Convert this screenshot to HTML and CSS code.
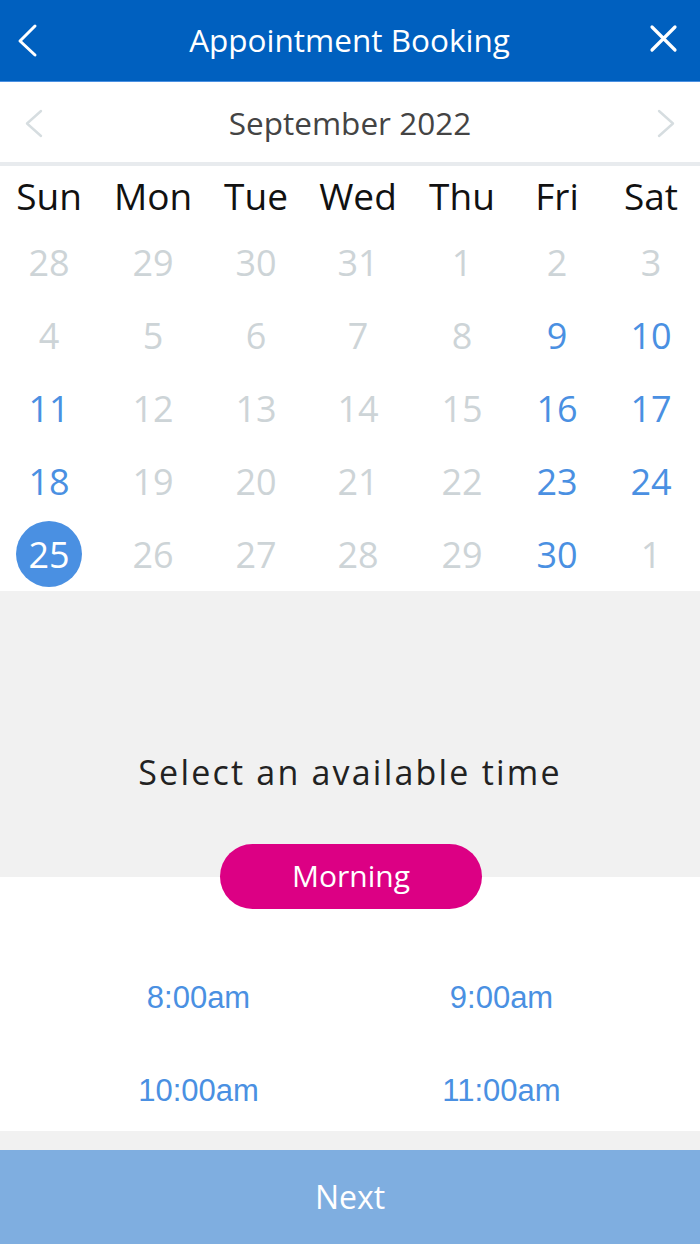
FILE: index.html
```html
<!DOCTYPE html>
<html lang="en">
<head>
<meta charset="utf-8">
<title>Appointment Booking</title>
<link rel="stylesheet" href="styles.css">
</head>
<body>
<div class="app">
  <header class="topbar">
    <svg class="topbar-icon back" width="40" height="40" viewBox="0 0 40 40"><path d="M27 5 L12 20 L27 34" fill="none" stroke="#fff" stroke-width="3" stroke-linecap="round" stroke-linejoin="round"/></svg>
    <h1 class="topbar-title">Appointment Booking</h1>
    <svg class="topbar-icon close" width="40" height="40" viewBox="0 0 40 40"><path d="M8 8 L31 31 M31 8 L8 31" fill="none" stroke="#fff" stroke-width="3.2" stroke-linecap="round"/></svg>
  </header>

  <nav class="month-nav">
    <svg class="month-arrow" width="40" height="40" viewBox="0 0 40 40"><path d="M27 8 L13 20.5 L27 33" fill="none" stroke="#d6dde0" stroke-width="2.4" stroke-linecap="round" stroke-linejoin="round"/></svg>
    <div class="month-label">September 2022</div>
    <svg class="month-arrow" width="40" height="40" viewBox="0 0 40 40"><path d="M13 8 L27 20.5 L13 33" fill="none" stroke="#d6dde0" stroke-width="2.4" stroke-linecap="round" stroke-linejoin="round"/></svg>
  </nav>

  <section class="calendar">
    <div class="cal-head">Sun</div><div class="cal-head">Mon</div><div class="cal-head">Tue</div><div class="cal-head">Wed</div><div class="cal-head">Thu</div><div class="cal-head">Fri</div><div class="cal-head">Sat</div>

    <div class="day off">28</div><div class="day off">29</div><div class="day off">30</div><div class="day off">31</div><div class="day off">1</div><div class="day off">2</div><div class="day off">3</div>
    <div class="day off">4</div><div class="day off">5</div><div class="day off">6</div><div class="day off">7</div><div class="day off">8</div><div class="day on">9</div><div class="day on">10</div>
    <div class="day on">11</div><div class="day off">12</div><div class="day off">13</div><div class="day off">14</div><div class="day off">15</div><div class="day on">16</div><div class="day on">17</div>
    <div class="day on">18</div><div class="day off">19</div><div class="day off">20</div><div class="day off">21</div><div class="day off">22</div><div class="day on">23</div><div class="day on">24</div>
    <div class="day selected"><span class="day-circle">25</span></div><div class="day off">26</div><div class="day off">27</div><div class="day off">28</div><div class="day off">29</div><div class="day on">30</div><div class="day off">1</div>
  </section>

  <section class="time-intro">
    <p class="time-title">Select an available time</p>
  </section>

  <div class="period-row">
    <span class="period-pill">Morning</span>
  </div>

  <section class="slots">
    <div class="slot">8:00am</div>
    <div class="slot">9:00am</div>
    <div class="slot">10:00am</div>
    <div class="slot">11:00am</div>
  </section>

  <div class="spacer"></div>

  <footer class="next-bar">Next</footer>
</div>
</body>
</html>
```

FILE: styles.css
```css
* { box-sizing: border-box; }

html, body {
  margin: 0;
  padding: 0;
  background: #ffffff;
}

body {
  font-family: "Open Sans", "DejaVu Sans", sans-serif;
  width: 700px;
  height: 1244px;
  overflow: hidden;
}

.app {
  display: flex;
  flex-direction: column;
  height: 1244px;
}

/* Header */
.topbar {
  height: 82px;
  background: #0060bf;
  border-bottom: 1px solid #4a90e2;
  display: flex;
  align-items: center;
  justify-content: space-between;
  padding: 0 16px 0 8px;
  flex: none;
}

.topbar-title {
  margin: 0 0 0 7px;
  color: #ffffff;
  font-weight: 400;
  font-size: 31.5px;
  line-height: 40px;
  padding-bottom: 2px;
}

.topbar-icon { display: block; }
.topbar-icon.close { transform: translateY(-2px); }

/* Month navigation */
.month-nav {
  height: 84px;
  flex: none;
  display: flex;
  align-items: center;
  justify-content: space-between;
  padding: 2px 14px 0 14px;
  border-bottom: 4px solid #e8ebee;
}

.month-label {
  font-size: 31.5px;
  color: #444444;
  line-height: 40px;
}

.month-arrow { display: block; }

/* Calendar */
.calendar {
  flex: none;
  display: grid;
  grid-template-columns: 98px 110px 96px 108px 100px 90px 98px;
  grid-template-rows: 60px repeat(5, 73px);
  background: #ffffff;
}

.cal-head {
  display: flex;
  align-items: center;
  justify-content: center;
  font-size: 37px;
  color: #111111;
  padding-bottom: 1px;
}

.day {
  display: flex;
  align-items: center;
  justify-content: center;
  font-size: 36px;
  padding-bottom: 1px;
}

.day.off { color: #cdd4d7; }
.day.on { color: #4a90e2; }

.day-circle {
  width: 66px;
  height: 66px;
  border-radius: 50%;
  background: #4a90e2;
  color: #ffffff;
  display: flex;
  align-items: center;
  justify-content: center;
}

/* Time selection */
.time-intro {
  flex: none;
  height: 253px;
  background: #f1f1f1;
  display: flex;
  align-items: flex-end;
  justify-content: center;
  padding-bottom: 52px;
}

.time-title {
  margin: 0;
  font-size: 34px;
  letter-spacing: 2.2px;
  color: #222222;
  line-height: 40px;
}

.period-row {
  flex: none;
  height: 65px;
  display: flex;
  justify-content: center;
  background: linear-gradient(#f1f1f1 0, #f1f1f1 33px, #ffffff 33px);
}

.period-pill {
  width: 262px;
  height: 65px;
  border-radius: 33px;
  background: #dc0084;
  color: #ffffff;
  font-size: 30px;
  display: flex;
  align-items: center;
  justify-content: center;
  margin-left: 2px;
  padding-bottom: 2px;
}

.slots {
  flex: none;
  height: 222px;
  background: #ffffff;
  display: grid;
  grid-template-columns: 1fr 1fr;
  grid-template-rows: 50px 50px;
  row-gap: 43px;
  padding: 64px 47px 15px 47px;
}

.slot {
  font-family: "Liberation Sans", Arial, sans-serif;
  font-size: 31px;
  color: #4a90e2;
  display: flex;
  align-items: center;
  justify-content: center;
}

.spacer {
  flex: none;
  height: 19px;
  background: #f1f1f1;
}

.next-bar {
  flex: 1;
  background: #7faee0;
  color: #ffffff;
  font-size: 32px;
  display: flex;
  align-items: center;
  justify-content: center;
  padding-bottom: 2px;
}
```
